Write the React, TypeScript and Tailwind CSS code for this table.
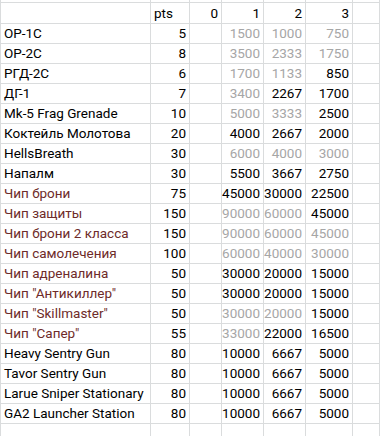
import React from "react";

type Cell = [number, boolean];
type Row = { name: string; red?: boolean; pts: number; vals: Cell[] };

const g = true;
const b = false;

const rows: Row[] = [
  { name: "ОР-1С", pts: 5, vals: [[1500, g], [1000, g], [750, g]] },
  { name: "ОР-2С", pts: 8, vals: [[3500, g], [2333, g], [1750, g]] },
  { name: "РГД-2С", pts: 6, vals: [[1700, g], [1133, g], [850, b]] },
  { name: "ДГ-1", pts: 7, vals: [[3400, g], [2267, b], [1700, b]] },
  { name: "Mk-5 Frag Grenade", pts: 10, vals: [[5000, g], [3333, g], [2500, b]] },
  { name: "Коктейль Молотова", pts: 20, vals: [[4000, b], [2667, b], [2000, b]] },
  { name: "HellsBreath", pts: 30, vals: [[6000, g], [4000, g], [3000, g]] },
  { name: "Напалм", pts: 30, vals: [[5500, b], [3667, b], [2750, b]] },
  { name: "Чип брони", red: true, pts: 75, vals: [[45000, b], [30000, b], [22500, b]] },
  { name: "Чип защиты", red: true, pts: 150, vals: [[90000, g], [60000, g], [45000, b]] },
  { name: "Чип брони 2 класса", red: true, pts: 150, vals: [[90000, g], [60000, g], [45000, g]] },
  { name: "Чип самолечения", red: true, pts: 100, vals: [[60000, g], [40000, g], [30000, g]] },
  { name: "Чип адреналина", red: true, pts: 50, vals: [[30000, b], [20000, b], [15000, b]] },
  { name: "Чип \"Антикиллер\"", red: true, pts: 50, vals: [[30000, b], [20000, b], [15000, b]] },
  { name: "Чип \"Skillmaster\"", red: true, pts: 50, vals: [[30000, g], [20000, g], [15000, b]] },
  { name: "Чип \"Сапер\"", red: true, pts: 55, vals: [[33000, g], [22000, b], [16500, b]] },
  { name: "Heavy Sentry Gun", pts: 80, vals: [[10000, b], [6667, b], [5000, b]] },
  { name: "Tavor Sentry Gun", pts: 80, vals: [[10000, b], [6667, b], [5000, b]] },
  { name: "Larue Sniper Stationary", pts: 80, vals: [[10000, b], [6667, b], [5000, b]] },
  { name: "GA2 Launcher Station", pts: 80, vals: [[10000, b], [6667, b], [5000, b]] },
];

const grid = "grid grid-cols-[150px_39px_32px_42px_42px_47px_1fr]";
const cell = "border-r border-b border-[#dadcdd] px-[3px] flex items-center whitespace-nowrap overflow-hidden";

const Blank = ({ h }: { h: string }) => (
  <div className={grid}>
    {[0, 1, 2, 3, 4, 5, 6].map((i) => (
      <div key={i} className={`${cell} ${h}`} />
    ))}
  </div>
);

export default function App() {
  return (
    <div
      className="w-[380px] h-[436px] overflow-hidden bg-white border-l border-[#dadcdd] text-[13.5px] text-black"
      style={{ fontFamily: "Roboto, 'Liberation Sans', sans-serif" }}
    >
      <Blank h="h-[3px]" />
      <div className={grid}>
        <div className={`${cell} h-[21px]`} />
        <div className={`${cell} h-[21px]`}>pts</div>
        <div className={`${cell} h-[21px] justify-end`}>0</div>
        <div className={`${cell} h-[21px] justify-end`}>1</div>
        <div className={`${cell} h-[21px] justify-end`}>2</div>
        <div className={`${cell} h-[21px] justify-end`}>3</div>
        <div className={`${cell} h-[21px]`} />
      </div>
      {rows.map((r) => (
        <div key={r.name} className={grid}>
          <div className={`${cell} h-[20px] ${r.red ? "text-[#6e2b29]" : ""}`}>{r.name}</div>
          <div className={`${cell} h-[20px] justify-end`}>{r.pts}</div>
          <div className={`${cell} h-[20px]`} />
          {r.vals.map(([v, gray], i) => (
            <div key={i} className={`${cell} h-[20px] justify-end ${gray ? "text-[#a6a6a6]" : ""}`}>
              {v}
            </div>
          ))}
          <div className={`${cell} h-[20px]`} />
        </div>
      ))}
      <Blank h="h-[20px]" />
    </div>
  );
}
